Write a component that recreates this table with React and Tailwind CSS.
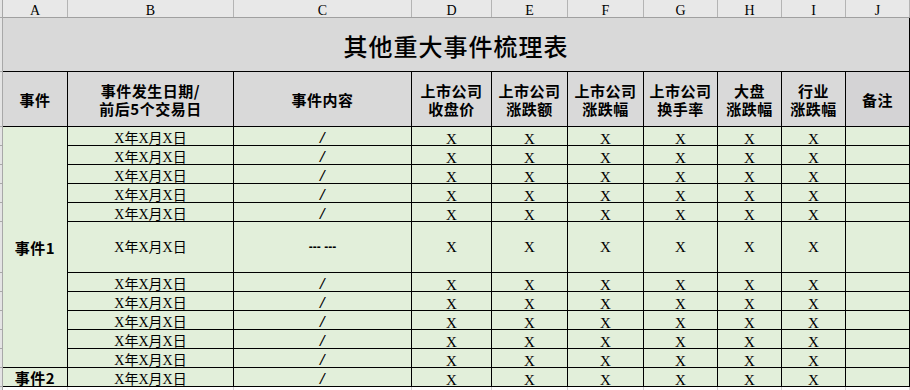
import React from "react";

const letters = ["A", "B", "C", "D", "E", "F", "G", "H", "I", "J"];
const letterW = [
  "w-[65px]", "w-[166px]", "w-[178px]", "w-[80px]", "w-[76px]",
  "w-[76px]", "w-[74px]", "w-[64px]", "w-[64px]", "w-[64px]",
];

const stripRows = [
  "h-[18px]", "h-[54px]", "h-[55px]",
  "h-[19px]", "h-[19px]", "h-[19px]", "h-[19px]", "h-[19px]",
  "h-[51px]",
  "h-[19px]", "h-[19px]", "h-[19px]", "h-[19px]", "h-[19px]",
  "h-[19px]",
];

const headers = [
  ["事件"],
  ["事件发生日期/", "前后5个交易日"],
  ["事件内容"],
  ["上市公司", "收盘价"],
  ["上市公司", "涨跌额"],
  ["上市公司", "涨跌幅"],
  ["上市公司", "换手率"],
  ["大盘", "涨跌幅"],
  ["行业", "涨跌幅"],
  ["备注"],
];

const serif = "font-['Liberation_Serif','Noto_Sans_CJK_SC',serif]";
const cjk = "font-['Noto_Sans_CJK_SC',sans-serif]";

function DateText({ cls }) {
  const x = `${serif} text-[14px]`;
  const c = `${cjk} text-[14px]`;
  return (
    <span className={`${cls} whitespace-nowrap`}>
      <span className={x}>X</span>
      <span className={c}>年</span>
      <span className={x}>X</span>
      <span className={c}>月</span>
      <span className={x}>X</span>
      <span className={c}>日</span>
    </span>
  );
}

function DataRow({ tall }) {
  const align = tall ? "items-center" : "items-end";
  const lead = tall ? "leading-[16px]" : "leading-[12px]";
  const txt = `${serif} text-[15px] ${lead}`;
  const base = `border-r border-b border-black bg-[#e2efda] flex justify-center ${align}`;
  const values = ["X", "X", "X", "X", "X", "X"];
  return (
    <>
      <div className={base}>
        <DateText cls={lead} />
      </div>
      <div className={base}>
        {tall ? (
          <span className="font-['Liberation_Sans',sans-serif] font-bold text-[12px] leading-[12px]">
            --- ---
          </span>
        ) : (
          <span className={`font-['Liberation_Mono',monospace] text-[14px] ${lead}`}>/</span>
        )}
      </div>
      {values.map((v, i) => (
        <div key={i} className={base}>
          <span className={txt}>{v}</span>
        </div>
      ))}
      <div className={base}></div>
    </>
  );
}

export default function App() {
  return (
    <div className="w-[910px] h-[390px] overflow-hidden bg-white flex text-black">
      {/* row header strip */}
      <div className="w-[3px] flex flex-col border-r border-[#a8a8a8] bg-[#e4e4e4] shrink-0">
        {stripRows.map((h, i) => (
          <div key={i} className={`${h} border-b border-[#a8a8a8] shrink-0`}></div>
        ))}
        <div className="flex-1"></div>
      </div>

      <div className="flex flex-col w-[907px] shrink-0">
        {/* column letters */}
        <div className="flex h-[18px] border-b border-[#a0a0a0] bg-[#e8e8e8] shrink-0">
          {letters.map((l, i) => (
            <div
              key={l}
              className={`${letterW[i]} shrink-0 border-r border-[#b4b4b4] flex items-end justify-center`}
            >
              <span className={`${serif} text-[14px] leading-[12px]`}>{l}</span>
            </div>
          ))}
        </div>

        {/* sheet */}
        <div className="grid grid-cols-[65px_166px_178px_80px_76px_76px_74px_64px_64px_64px] grid-rows-[54px_55px_repeat(5,19px)_51px_repeat(5,19px)_19px] shrink-0">
          <div className="col-span-10 border-b border-r border-black bg-[#d9d9d9] flex items-center justify-center">
            <span className={`${cjk} font-medium text-[24px] leading-[28px] tracking-[1px] pt-[3px]`}>
              其他重大事件梳理表
            </span>
          </div>

          {headers.map((lines, i) => (
            <div
              key={i}
              className={`border-r border-b border-black flex flex-col items-center justify-center pt-[1px] ${
                i === 9 ? "bg-[#d4d3d5]" : "bg-[#d9d9d9]"
              }`}
            >
              {lines.map((t) => (
                <span
                  key={t}
                  className={`${cjk} font-bold text-[15px] leading-[18px] tracking-[0.5px] whitespace-nowrap`}
                >
                  {t}
                </span>
              ))}
            </div>
          ))}

          <div className="row-span-11 border-r border-b border-black bg-[#e2efda] flex items-center justify-center">
            <span className={`${cjk} font-bold text-[15px] leading-[17px] tracking-[0.5px]`}>事件1</span>
          </div>
          <DataRow />
          <DataRow />
          <DataRow />
          <DataRow />
          <DataRow />
          <DataRow tall />
          <DataRow />
          <DataRow />
          <DataRow />
          <DataRow />
          <DataRow />

          <div className="border-r border-b border-black bg-[#e2efda] flex items-end justify-center">
            <span className={`${cjk} font-bold text-[15px] leading-[17px] tracking-[0.5px]`}>事件2</span>
          </div>
          <DataRow />
        </div>

        {/* empty sliver below */}
        <div className="flex flex-1 bg-white">
          {letterW.map((w, i) => (
            <div key={i} className={`${w} shrink-0 border-r border-[#d4d4d4]`}></div>
          ))}
        </div>
      </div>
    </div>
  );
}
